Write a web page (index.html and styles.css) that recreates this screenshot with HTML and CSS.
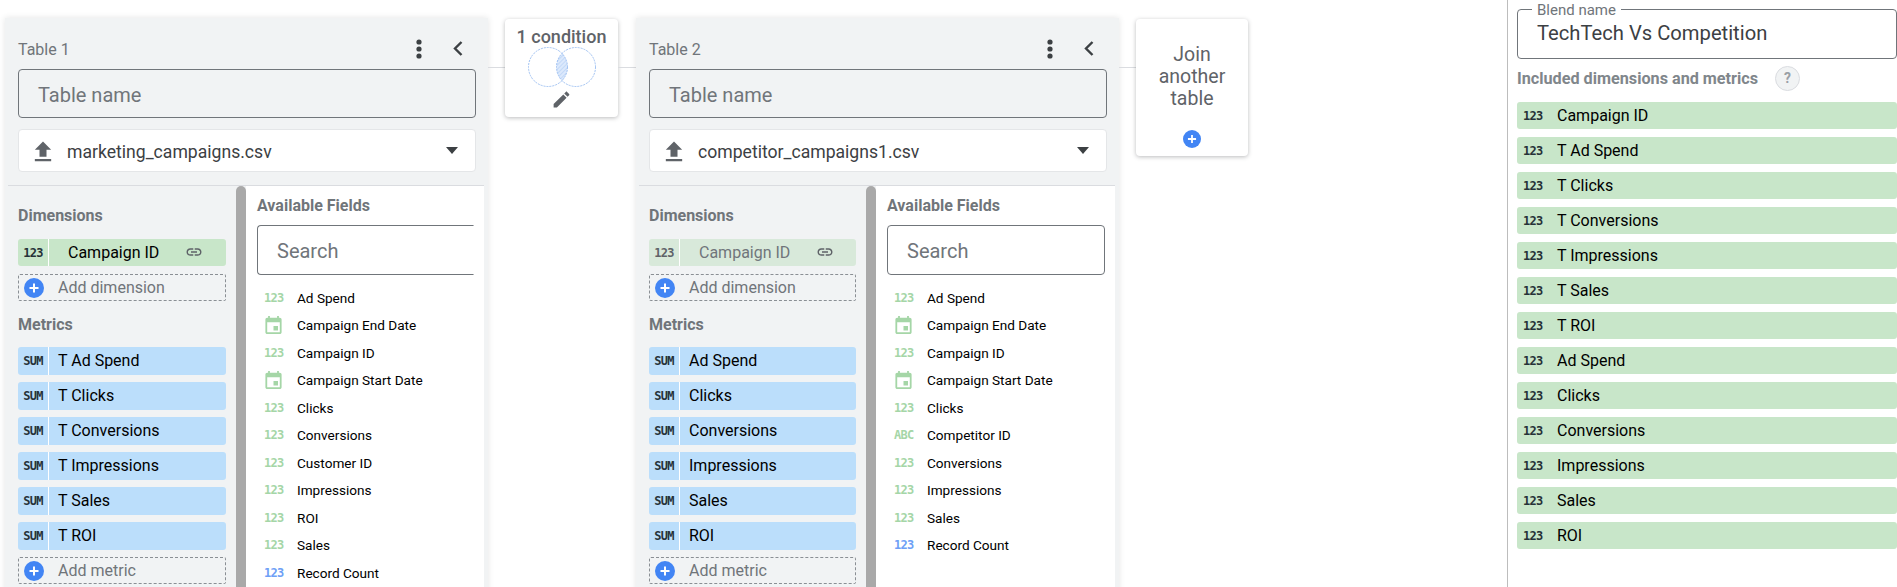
FILE: index.html
```html
<!DOCTYPE html>
<html lang="en">
<head>
<meta charset="utf-8">
<title>Blend data</title>
<link rel="stylesheet" href="styles.css">
</head>
<body>
<svg class="defs" width="0" height="0" aria-hidden="true">
  <symbol id="i-event" viewBox="3 1 18 20"><path d="M17 12h-5v5h5v-5zM16 1v2H8V1H6v2H5c-1.11 0-1.99.9-1.99 2L3 19c0 1.1.89 2 2 2h14c1.1 0 2-.9 2-2V5c0-1.1-.9-2-2-2h-1V1h-2zm3 18H5V8h14v11z"/></symbol>
  <symbol id="i-link" viewBox="0 0 24 24"><path d="M3.9 12c0-1.71 1.39-3.1 3.1-3.1h4V7H7c-2.76 0-5 2.24-5 5s2.24 5 5 5h4v-1.9H7c-1.71 0-3.1-1.39-3.1-3.1zM8 13h8v-2H8v2zm9-6h-4v1.9h4c1.71 0 3.1 1.39 3.1 3.1s-1.39 3.1-3.1 3.1h-4V17h4c2.76 0 5-2.24 5-5s-2.24-5-5-5z"/></symbol>
  <symbol id="i-upload" viewBox="0 0 24 24"><path d="M9 16h6v-6h4l-7-7-7 7h4zm-4 2h14v2H5z"/></symbol>
  <symbol id="i-edit" viewBox="0 0 24 24"><path d="M3 17.25V21h3.75L17.81 9.94l-3.75-3.75L3 17.25zM20.71 7.04c.39-.39.39-1.02 0-1.41l-2.34-2.34c-.39-.39-1.02-.39-1.41 0l-1.83 1.83 3.75 3.75 1.83-1.83z"/></symbol>
  <symbol id="i-plus" viewBox="0 0 20 20"><circle cx="10" cy="10" r="10" fill="#4285f4"/><path d="M9 5.5h2V9h3.5v2H11v3.5H9V11H5.5V9H9z" fill="#fff"/></symbol>
  <symbol id="i-kebab" viewBox="0 0 6 20"><circle cx="3" cy="3" r="2.6"/><circle cx="3" cy="10" r="2.6"/><circle cx="3" cy="17" r="2.6"/></symbol>
  <symbol id="i-back" viewBox="0 0 10 15"><path d="M8.5 1 2 7.5 8.5 14" fill="none" stroke="currentColor" stroke-width="2.4"/></symbol>
</svg>
<div class="page">
  <main class="canvas">
    <section class="panel">
      <header class="panel-head">
        <span class="panel-title">Table 1</span>
        <svg class="kebab"><use href="#i-kebab"/></svg>
        <svg class="back"><use href="#i-back"/></svg>
      </header>
      <div class="name-box">Table name</div>
      <div class="source">
        <svg class="upload"><use href="#i-upload"/></svg>
        <span class="source-name">marketing_campaigns.csv</span>
        <span class="caret"></span>
      </div>
      <div class="panel-body">
        <div class="config">
          <h3 class="config-label">Dimensions</h3>
          <div class="pill pill-dim"><span class="type">123</span><span class="pill-text pill-text-dim">Campaign ID</span><svg class="link-icon"><use href="#i-link"/></svg></div>
          <div class="add"><svg class="plus"><use href="#i-plus"/></svg>Add dimension</div>
          <h3 class="config-label config-label-metrics">Metrics</h3>
          <div class="pill-stack">
            <div class="pill pill-met"><span class="type">SUM</span><span class="pill-text">T Ad Spend</span></div>
            <div class="pill pill-met"><span class="type">SUM</span><span class="pill-text">T Clicks</span></div>
            <div class="pill pill-met"><span class="type">SUM</span><span class="pill-text">T Conversions</span></div>
            <div class="pill pill-met"><span class="type">SUM</span><span class="pill-text">T Impressions</span></div>
            <div class="pill pill-met"><span class="type">SUM</span><span class="pill-text">T Sales</span></div>
            <div class="pill pill-met"><span class="type">SUM</span><span class="pill-text">T ROI</span></div>
          </div>
          <div class="add add-metric"><svg class="plus"><use href="#i-plus"/></svg>Add metric</div>
        </div>
        <div class="scroll-thumb"></div>
        <div class="fields">
          <h3 class="fields-label">Available Fields</h3>
          <div class="search search-clipped">Search</div>
          <ul class="field-list">
            <li><span class="ftype">123</span>Ad Spend</li>
            <li><svg class="cal"><use href="#i-event"/></svg>Campaign End Date</li>
            <li><span class="ftype">123</span>Campaign ID</li>
            <li><svg class="cal"><use href="#i-event"/></svg>Campaign Start Date</li>
            <li><span class="ftype">123</span>Clicks</li>
            <li><span class="ftype">123</span>Conversions</li>
            <li><span class="ftype">123</span>Customer ID</li>
            <li><span class="ftype">123</span>Impressions</li>
            <li><span class="ftype">123</span>ROI</li>
            <li><span class="ftype">123</span>Sales</li>
            <li><span class="ftype ftype-blue">123</span>Record Count</li>
          </ul>
        </div>
      </div>
    </section>
    <div class="connector"></div>
    <div class="card card-cond">
      <div class="card-text">1 condition</div>
      <svg class="venn" viewBox="0 0 68 40">
        <defs>
          <clipPath id="lens"><circle cx="20" cy="20" r="19.5"/></clipPath>
          <pattern id="hatch" width="3" height="3" patternUnits="userSpaceOnUse" patternTransform="rotate(-45)">
            <rect width="3" height="3" fill="#dce9fc"/><rect width="3" height="1" fill="#c3d9f8"/>
          </pattern>
        </defs>
        <circle cx="48" cy="20" r="19.5" clip-path="url(#lens)" fill="url(#hatch)"/>
        <circle cx="20" cy="20" r="19.5" fill="none" stroke="#9fc1f2" stroke-width="1" stroke-dasharray="2 1"/>
        <circle cx="48" cy="20" r="19.5" fill="none" stroke="#9fc1f2" stroke-width="1" stroke-dasharray="2 1"/>
      </svg>
      <svg class="edit"><use href="#i-edit"/></svg>
    </div>
    <div class="connector connector-wide"></div>
    <section class="panel panel-alt">
      <header class="panel-head">
        <span class="panel-title">Table 2</span>
        <svg class="kebab"><use href="#i-kebab"/></svg>
        <svg class="back"><use href="#i-back"/></svg>
      </header>
      <div class="name-box">Table name</div>
      <div class="source">
        <svg class="upload"><use href="#i-upload"/></svg>
        <span class="source-name">competitor_campaigns1.csv</span>
        <span class="caret"></span>
      </div>
      <div class="panel-body">
        <div class="config">
          <h3 class="config-label">Dimensions</h3>
          <div class="pill pill-dim pill-muted"><span class="type">123</span><span class="pill-text pill-text-dim">Campaign ID</span><svg class="link-icon"><use href="#i-link"/></svg></div>
          <div class="add"><svg class="plus"><use href="#i-plus"/></svg>Add dimension</div>
          <h3 class="config-label config-label-metrics">Metrics</h3>
          <div class="pill-stack">
            <div class="pill pill-met"><span class="type">SUM</span><span class="pill-text">Ad Spend</span></div>
            <div class="pill pill-met"><span class="type">SUM</span><span class="pill-text">Clicks</span></div>
            <div class="pill pill-met"><span class="type">SUM</span><span class="pill-text">Conversions</span></div>
            <div class="pill pill-met"><span class="type">SUM</span><span class="pill-text">Impressions</span></div>
            <div class="pill pill-met"><span class="type">SUM</span><span class="pill-text">Sales</span></div>
            <div class="pill pill-met"><span class="type">SUM</span><span class="pill-text">ROI</span></div>
          </div>
          <div class="add add-metric"><svg class="plus"><use href="#i-plus"/></svg>Add metric</div>
        </div>
        <div class="scroll-thumb"></div>
        <div class="fields">
          <h3 class="fields-label">Available Fields</h3>
          <div class="search">Search</div>
          <ul class="field-list">
            <li><span class="ftype">123</span>Ad Spend</li>
            <li><svg class="cal"><use href="#i-event"/></svg>Campaign End Date</li>
            <li><span class="ftype">123</span>Campaign ID</li>
            <li><svg class="cal"><use href="#i-event"/></svg>Campaign Start Date</li>
            <li><span class="ftype">123</span>Clicks</li>
            <li><span class="ftype">ABC</span>Competitor ID</li>
            <li><span class="ftype">123</span>Conversions</li>
            <li><span class="ftype">123</span>Impressions</li>
            <li><span class="ftype">123</span>Sales</li>
            <li><span class="ftype ftype-blue">123</span>Record Count</li>
          </ul>
        </div>
      </div>
    </section>
    <div class="connector"></div>
    <div class="card card-join">
      <div class="card-text card-text-join">Join<br>another<br>table</div>
      <svg class="plus plus-join"><use href="#i-plus"/></svg>
    </div>
  </main>
  <aside class="side">
    <div class="blend-box">
      <span class="blend-label">Blend name</span>
      <span class="blend-value">TechTech Vs Competition</span>
    </div>
    <div class="included">
      <span class="included-label">Included dimensions and metrics</span>
      <span class="help">?</span>
    </div>
    <ul class="result-list">
      <li><span class="type">123</span>Campaign ID</li>
      <li><span class="type">123</span>T Ad Spend</li>
      <li><span class="type">123</span>T Clicks</li>
      <li><span class="type">123</span>T Conversions</li>
      <li><span class="type">123</span>T Impressions</li>
      <li><span class="type">123</span>T Sales</li>
      <li><span class="type">123</span>T ROI</li>
      <li><span class="type">123</span>Ad Spend</li>
      <li><span class="type">123</span>Clicks</li>
      <li><span class="type">123</span>Conversions</li>
      <li><span class="type">123</span>Impressions</li>
      <li><span class="type">123</span>Sales</li>
      <li><span class="type">123</span>ROI</li>
    </ul>
  </aside>
</div>
</body>
</html>
```
FILE: styles.css
```css
* { box-sizing: border-box; }
html, body { margin: 0; padding: 0; height: 100%; overflow: hidden; background: #fff; }
body { font-family: Roboto, "Liberation Sans", sans-serif; color: #000; }
.defs { position: absolute; }
ul { list-style: none; margin: 0; padding: 0; }
h3 { margin: 0; }
.page { display: flex; width: 1897px; height: 587px; overflow: hidden; }

.canvas { flex: none; width: 1507px; display: flex; align-items: flex-start; padding: 18px 0 0 5px; }
.connector { flex: none; width: 17px; height: 1px; margin-top: 49px; background: #dadce0; }
.connector-wide { width: 18px; }

.panel { flex: none; width: 483px; height: 600px; background: #f1f3f4; box-shadow: 0 0 6px rgba(60,64,67,.14); display: flex; flex-direction: column; }
.panel-head { flex: none; height: 51px; display: flex; align-items: center; padding: 10px 0 0 13px; }
.panel-title { flex: 1; font-size: 16px; color: #70757a; padding-top: 1px; }
.kebab { width: 6px; height: 20px; fill: #3c4043; margin-right: 31px; }
.back { width: 10px; height: 15px; color: #3c4043; margin-right: 25px; }
.name-box { flex: none; height: 49px; margin: 0 12px 0 13px; padding-left: 19px; border: 1px solid #70757a; border-radius: 4px; font-size: 20px; line-height: 50px; color: #70757a; }
.source { flex: none; height: 43px; margin: 11px 12px 0 13px; padding: 3px 0 0 13px; background: #fff; border: 1px solid #e4e6e8; border-radius: 4px; display: flex; align-items: center; }
.upload { width: 28px; height: 28px; fill: #5f6368; margin-left: -3px; }
.source-name { flex: 1; font-size: 17.6px; color: #3c4043; margin-left: 10px; }
.caret { width: 0; height: 0; border-left: 6px solid transparent; border-right: 6px solid transparent; border-top: 7px solid #3c4043; margin: -3px 17px 0 0; }

.panel-body { flex: 1; margin: 13px 4px 0 3px; border-top: 1px solid #dadce0; display: flex; min-height: 0; }
.config { flex: none; width: 228px; padding: 0 10px; }
.panel-alt .config { width: 227px; }
.config-label { font-size: 16px; font-weight: 700; line-height: 20px; color: #70757a; margin-top: 20px; }
.config-label-metrics { margin-top: 14px; }
.pill { display: flex; align-items: stretch; border-radius: 3px; overflow: hidden; }
.pill-dim { height: 27px; background: #c8e6c9; margin-top: 13px; }
.pill-met { height: 28px; background: #bbdefb; }
.pill-stack { display: flex; flex-direction: column; gap: 7px; margin-top: 12px; }
.type { font-family: "DejaVu Sans Mono", monospace; font-weight: 700; font-size: 12px; letter-spacing: -.7px; color: #263238; }
.pill .type { flex: none; width: 31px; display: flex; align-items: center; justify-content: center; border-right: 1px solid #fff; }
.pill-text { flex: 1; padding-left: 9px; font-size: 16px; line-height: 27px; white-space: nowrap; }
.pill-text-dim { padding-left: 19px; }
.link-icon { width: 18px; height: 18px; fill: #5f6368; margin: 4px 23px 0 0; }
.pill-muted { background: #d8e9da; }
.pill-muted .type { color: #5f6368; }
.pill-muted .pill-text { color: #70757a; }
.pill-muted .link-icon { margin-right: 22px; }
.add { height: 27px; margin-top: 8px; border: 1px dashed #8a8f94; border-radius: 2px; display: flex; align-items: center; font-size: 16px; color: #70757a; padding-left: 5px; }
.add-metric { margin-top: 7px; }
.plus { width: 20px; height: 20px; margin-right: 14px; flex: none; }

.scroll-thumb { flex: none; width: 10px; background: #a9a9a9; border-radius: 5px 5px 0 0; }
.fields { flex: 1; background: #fff; padding: 0 10px 0 11px; }
.fields-label { font-size: 16px; font-weight: 700; line-height: 20px; color: #70757a; margin-top: 10px; }
.search { height: 50px; margin-top: 9px; border: 1px solid #70757a; border-radius: 4px; padding-left: 19px; font-size: 20px; line-height: 50px; color: #70757a; }
.search-clipped { border-right-color: transparent; border-top-right-radius: 0; border-bottom-right-radius: 0; }
.field-list { margin-top: 9px; }
.field-list li { height: 27.5px; display: flex; align-items: center; font-size: 13.6px; color: #000; white-space: nowrap; }
.ftype { flex: none; width: 40px; padding-left: 7px; font-family: "DejaVu Sans Mono", monospace; font-size: 12px; font-weight: 700; letter-spacing: -.7px; color: #a5d6a7; }
.ftype-blue { color: #6ea0f6; }
.cal { flex: none; width: 17px; height: 18px; fill: #a5d6a7; margin: 0 15px 0 8px; }

.card { flex: none; background: #fff; border-radius: 4px; box-shadow: 0 1px 4px rgba(60,64,67,.35); display: flex; flex-direction: column; align-items: center; color: #5f6368; margin-top: 1px; }
.card-cond { width: 113px; height: 98px; }
.card-join { width: 112px; height: 137px; }
.card-text { font-size: 18px; font-weight: 500; line-height: 22px; text-align: center; margin-top: 7px; white-space: nowrap; }
.card-text-join { margin-top: 25px; font-size: 19.5px; font-weight: 400; }
.venn { width: 68px; height: 40px; margin-top: -1px; }
.edit { width: 21px; height: 21px; fill: #5f6368; margin-top: 2px; }
.plus-join { width: 18px; height: 18px; margin: 20px 0 0; }

.side { flex: none; width: 390px; border-left: 1px solid #bdbdbd; padding-left: 9px; }
.blend-box { position: relative; height: 50px; margin-top: 9px; border: 1px solid #70757a; border-radius: 4px; padding: 11px 0 0 19px; font-size: 20.2px; color: #3c4043; white-space: nowrap; }
.blend-label { position: absolute; left: 14px; top: -9px; padding: 0 5px; background: #fff; font-size: 15px; line-height: 18px; color: #70757a; }
.included { display: flex; align-items: center; height: 26px; margin-top: 6px; }
.included-label { font-size: 16.2px; font-weight: 700; color: #80868b; }
.help { width: 25px; height: 25px; margin-left: 17px; border: 1px solid #dadce0; border-radius: 50%; background: #f1f3f4; display: flex; align-items: center; justify-content: center; font-size: 14px; font-weight: 700; color: #9aa0a6; }
.result-list { display: flex; flex-direction: column; gap: 8px; margin-top: 11px; }
.result-list li { height: 27px; background: #c8e6c9; border-radius: 3px; display: flex; align-items: center; font-size: 16px; white-space: nowrap; }
.result-list .type { flex: none; width: 40px; padding-left: 6px; }
```
